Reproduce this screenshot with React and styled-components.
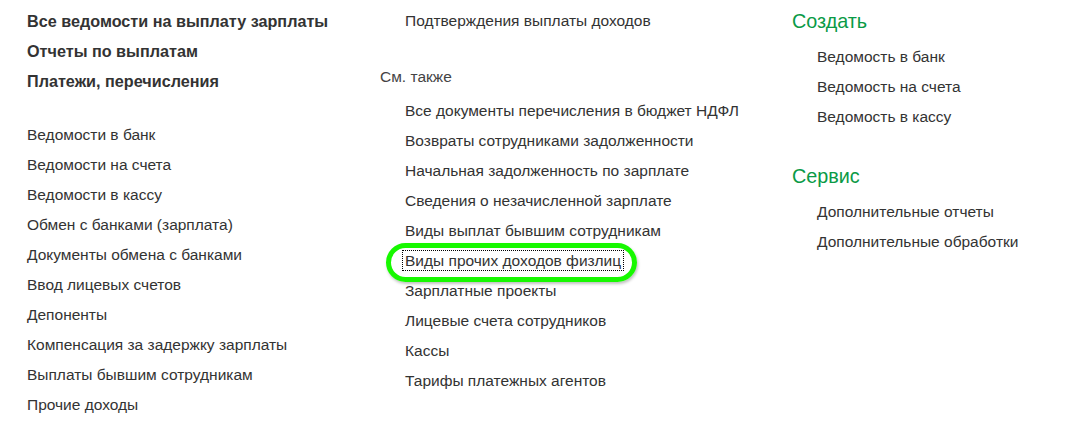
import React from 'react'
import styled, { createGlobalStyle } from 'styled-components'

const Global = createGlobalStyle`
    html, body{
        margin: 0;
        padding: 0;
        background: #fff;
    }
    body{
        font-family: "Liberation Sans", Arial, sans-serif;
        font-size: 15.5px;
        color: #333;
    }
`

const Page = styled.div`
    display: grid;
    grid-template-columns: 353px 412px 1fr;
    padding: 6px 0 0 27px;
`

const Column = styled.div`
    display: flex;
    flex-direction: column;
`

const Group = styled.div`
    display: flex;
    flex-direction: column;
    margin-top: ${p => p.gap || 0}px;
    padding-left: ${p => p.indent || 0}px;
`

const Item = styled.div`
    position: relative;
    height: 30px;
    line-height: 30px;
    white-space: nowrap;
    font-size: ${p => p.bold ? '16.2px' : '15.5px'};
    font-weight: ${p => p.bold ? 700 : 400};
    color: #333;
`

const Caption = styled.div`
    height: 30px;
    line-height: 30px;
    color: #444;
`

const Heading = styled.div`
    height: 30px;
    line-height: 30px;
    font-size: 19.8px;
    color: #0a9a46;
`

const Focused = styled.span`
    outline: 1px dotted #000;
    outline-offset: 1px;
    padding: 0 1px;
    margin-left: -1px;
`

const Ring = styled.div`
    position: absolute;
    left: -19px;
    top: -3px;
    width: 251px;
    height: 39px;
    box-sizing: border-box;
    border: 5.5px solid #17f800;
    border-radius: 20px;
    box-shadow: 1px 2px 3px rgba(0,0,0,.25);
    pointer-events: none;
`

const left = [
    'Ведомости в банк',
    'Ведомости на счета',
    'Ведомости в кассу',
    'Обмен с банками (зарплата)',
    'Документы обмена с банками',
    'Ввод лицевых счетов',
    'Депоненты',
    'Компенсация за задержку зарплаты',
    'Выплаты бывшим сотрудникам',
    'Прочие доходы',
]

const seeAlso = [
    'Все документы перечисления в бюджет НДФЛ',
    'Возвраты сотрудниками задолженности',
    'Начальная задолженность по зарплате',
    'Сведения о незачисленной зарплате',
    'Виды выплат бывшим сотрудникам',
    'Виды прочих доходов физлиц',
    'Зарплатные проекты',
    'Лицевые счета сотрудников',
    'Кассы',
    'Тарифы платежных агентов',
]

const App = () => (
    <>
        <Global/>
        <Page>
            <Column>
                <Item bold>Все ведомости на выплату зарплаты</Item>
                <Item bold>Отчеты по выплатам</Item>
                <Item bold>Платежи, перечисления</Item>
                <Group gap={24}>
                    {left.map(t => <Item key={t}>{t}</Item>)}
                </Group>
            </Column>
            <Column>
                <Group indent={25}>
                    <Item>Подтверждения выплаты доходов</Item>
                </Group>
                <Group gap={26}>
                    <Caption>См. также</Caption>
                </Group>
                <Group gap={4} indent={25}>
                    {seeAlso.map(t => t === 'Виды прочих доходов физлиц'
                        ? <Item key={t}><Focused>{t}</Focused><Ring/></Item>
                        : <Item key={t}>{t}</Item>)}
                </Group>
            </Column>
            <Column>
                <Heading>Создать</Heading>
                <Group gap={6} indent={25}>
                    <Item>Ведомость в банк</Item>
                    <Item>Ведомость на счета</Item>
                    <Item>Ведомость в кассу</Item>
                </Group>
                <Group gap={29}>
                    <Heading>Сервис</Heading>
                </Group>
                <Group gap={6} indent={25}>
                    <Item>Дополнительные отчеты</Item>
                    <Item>Дополнительные обработки</Item>
                </Group>
            </Column>
        </Page>
    </>
)

export default App
